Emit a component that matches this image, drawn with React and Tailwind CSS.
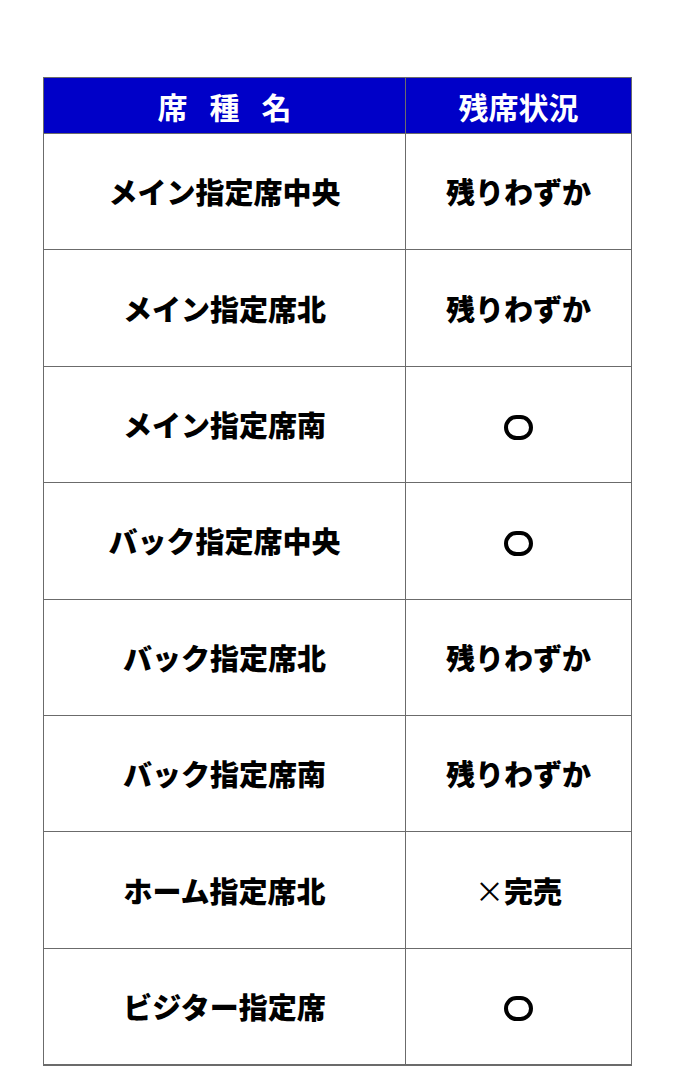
import React from "react";

const rows = [
  ["メイン指定席中央", "残りわずか"],
  ["メイン指定席北", "残りわずか"],
  ["メイン指定席南", "o"],
  ["バック指定席中央", "o"],
  ["バック指定席北", "残りわずか"],
  ["バック指定席南", "残りわずか"],
  ["ホーム指定席北", "x"],
  ["ビジター指定席", "o"],
];

function Circle() {
  return (
    <span className="inline-block align-middle w-[29px] h-[25px] rounded-full border-[4px] border-black -mt-[3px]" aria-label="○"></span>
  );
}

export default function App() {
  return (
    <div
      className="bg-white w-[695px] h-[1088px] pt-[77px] pl-[43px]"
      style={{ fontFamily: '"Noto Sans CJK JP", "Noto Sans", sans-serif' }}
    >
      <table className="border-collapse w-[588px] table-fixed">
        <colgroup>
          <col className="w-[362px]" />
          <col className="w-[226px]" />
        </colgroup>
        <thead>
          <tr className="h-[56px] bg-[#0000c8] text-white text-[30px]">
            <th className="border border-[#6b6b6b] font-semibold leading-none">
              <div className="flex justify-center gap-[22px]">
                <span>席</span>
                <span>種</span>
                <span>名</span>
              </div>
            </th>
            <th className="border border-[#6b6b6b] font-semibold leading-none">残席状況</th>
          </tr>
        </thead>
        <tbody>
          {rows.map(([name, status], i) => (
            <tr key={i} className="h-[116.4px] text-[29px] font-black text-black">
              <td
                className={`border border-[#6b6b6b] text-center leading-none ${
                  i === rows.length - 1 ? "border-b-2" : ""
                }`}
              >
                {name}
              </td>
              <td
                className={`border border-[#6b6b6b] text-center leading-none ${
                  i === rows.length - 1 ? "border-b-2" : ""
                }`}
              >
                {status === "x" ? (
                  <span>
                    <span className="font-normal">×</span>完売
                  </span>
                ) : status === "o" ? (
                  <Circle />
                ) : (
                  status
                )}
              </td>
            </tr>
          ))}
        </tbody>
      </table>
    </div>
  );
}
